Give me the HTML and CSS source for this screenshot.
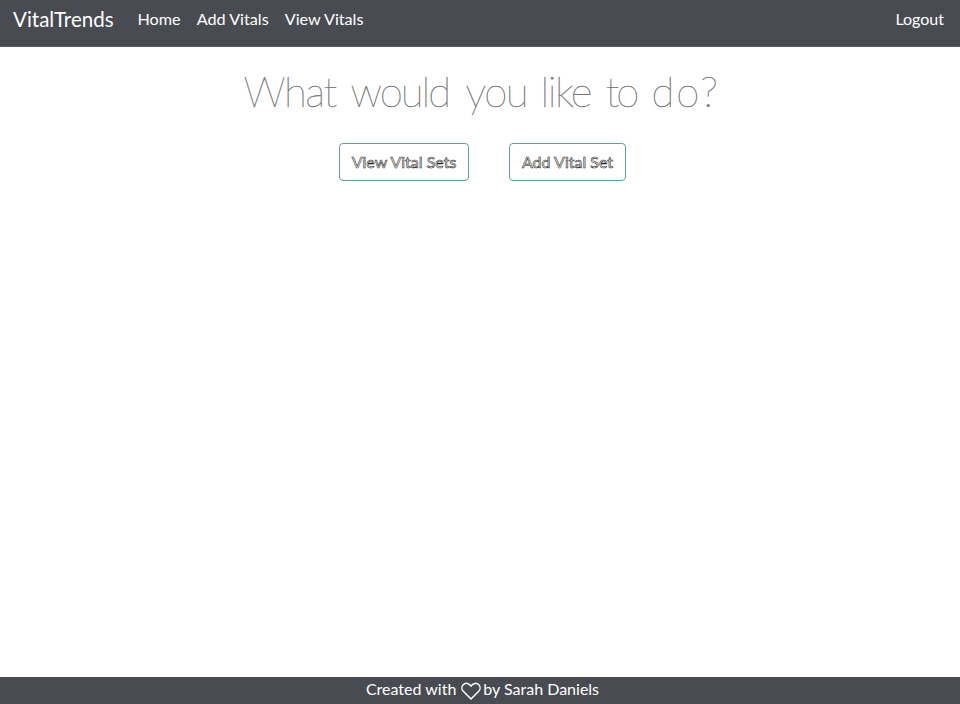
FILE: index.html
```html
<!DOCTYPE html>
<html lang="en">
<head>
<meta charset="utf-8">
<title>VitalTrends</title>
<link rel="stylesheet" href="styles.css">
</head>
<body>
<nav class="navbar">
  <a class="brand">VitalTrends</a>
  <a class="link">Home</a>
  <a class="link">Add Vitals</a>
  <a class="link">View Vitals</a>
  <a class="link logout">Logout</a>
</nav>
<main class="content">
  <h1 class="title"><span>What </span><span class="tight">would </span><span>you </span><span>like </span><span class="tightest">to </span><span class="wide">do?</span></h1>
  <div class="actions">
    <a class="button button-view">View Vital Sets</a>
    <a class="button button-add">Add Vital Set</a>
  </div>
</main>
<footer class="footer">
  <span>Created with</span>
  <svg class="heart" viewBox="0 0 20 18" width="20" height="18"><path d="M10 17 2.300 9.300C.5 7.400.5 4.500 2.200 2.800 4.400.6 8 .8 10 4.200 12 .8 15.600.6 17.800 2.800 19.500 4.500 19.500 7.400 17.700 9.300Z"/></svg>
  <span>by Sarah Daniels</span>
</footer>
</body>
</html>
```
FILE: styles.css
```css
* { box-sizing: border-box; }
body {
  margin: 0;
  height: 704px;
  display: flex;
  flex-direction: column;
  overflow: hidden;
  background: #fff;
  font: 16px/24px Lato, sans-serif;
}
.navbar {
  height: 47px;
  padding: 0 16px 9px 13px;
  display: flex;
  align-items: center;
  background: #484c52;
  border-bottom: 1px solid #5d6065;
  color: #fff;
}
.brand { font-size: 20.5px; margin-right: 24px; }
.link { margin-right: 16px; font-size: 16.200px; }
.logout { margin: 0 0 0 auto; font-size: 16px; }
.content { flex: 1; }
.title {
  margin: 20px 0 0 2px;
  height: 48px;
  display: grid;
  grid-template-columns: 107px 115px 75px 65px 46px 67px;
  justify-content: center;
  font-size: 42px;
  font-weight: 100;
  line-height: 48px;
  letter-spacing: -1.500px;
  white-space: nowrap;
  color: #777;
  -webkit-text-stroke: 0.4px #777;
}
.tight { letter-spacing: -2px; }
.tightest { letter-spacing: -3px; }
.wide { letter-spacing: 2px; }
.actions {
  margin: 28px 0 0 5px;
  display: flex;
  justify-content: center;
  gap: 40px;
}
.button {
  height: 38px;
  border: 1px solid #5fa0a4;
  border-radius: 4px;
  text-align: center;
  line-height: 36px;
  color: #fff;
  -webkit-text-stroke: 0.6px #222;
}
.button-view { width: 130px; }
.button-add { width: 117px; }
.footer {
  height: 27px;
  padding: 0 0 3px 5px;
  display: flex;
  justify-content: center;
  align-items: center;
  background: #484c52;
  color: #fff;
}
.heart {
  margin: 3px 2px 0 5px;
  fill: none;
  stroke: #fff;
  stroke-width: 1.5;
  stroke-linejoin: round;
}
```
